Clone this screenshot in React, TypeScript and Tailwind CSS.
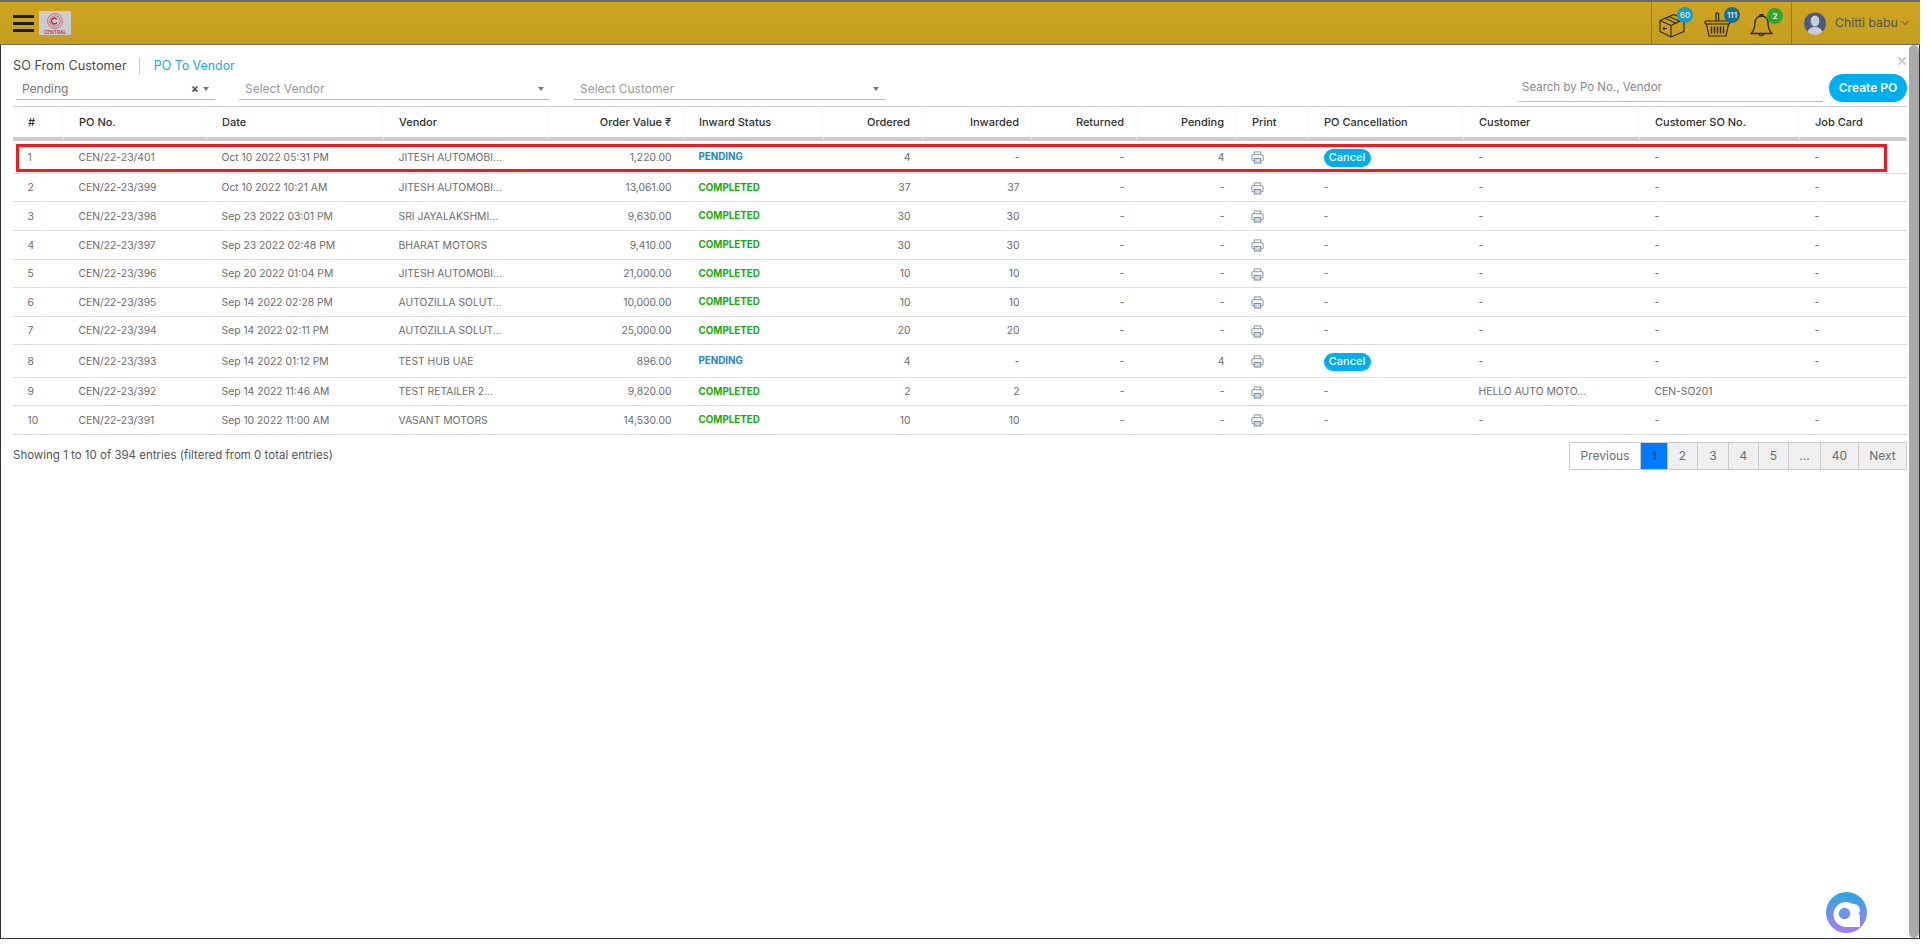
import { ChevronDown, X } from "lucide-react"

type Row = {
  n: number
  po: string
  date: string
  vendor: string
  value: string
  status: "PENDING" | "COMPLETED"
  ordered: string
  inwarded: string
  pending: string
  cancel?: boolean
  customer?: string
  so?: string
  job?: string
  h: string
}

const rows: Row[] = [
  { n: 1, po: "CEN/22-23/401", date: "Oct 10 2022 05:31 PM", vendor: "JITESH AUTOMOBI...", value: "1,220.00", status: "PENDING", ordered: "4", inwarded: "-", pending: "4", cancel: true, h: "h-[33px]" },
  { n: 2, po: "CEN/22-23/399", date: "Oct 10 2022 10:21 AM", vendor: "JITESH AUTOMOBI...", value: "13,061.00", status: "COMPLETED", ordered: "37", inwarded: "37", pending: "-", h: "h-[28px]" },
  { n: 3, po: "CEN/22-23/398", date: "Sep 23 2022 03:01 PM", vendor: "SRI JAYALAKSHMI...", value: "9,630.00", status: "COMPLETED", ordered: "30", inwarded: "30", pending: "-", h: "h-[29px]" },
  { n: 4, po: "CEN/22-23/397", date: "Sep 23 2022 02:48 PM", vendor: "BHARAT MOTORS", value: "9,410.00", status: "COMPLETED", ordered: "30", inwarded: "30", pending: "-", h: "h-[29px]" },
  { n: 5, po: "CEN/22-23/396", date: "Sep 20 2022 01:04 PM", vendor: "JITESH AUTOMOBI...", value: "21,000.00", status: "COMPLETED", ordered: "10", inwarded: "10", pending: "-", h: "h-[28px]" },
  { n: 6, po: "CEN/22-23/395", date: "Sep 14 2022 02:28 PM", vendor: "AUTOZILLA SOLUT...", value: "10,000.00", status: "COMPLETED", ordered: "10", inwarded: "10", pending: "-", h: "h-[29px]" },
  { n: 7, po: "CEN/22-23/394", date: "Sep 14 2022 02:11 PM", vendor: "AUTOZILLA SOLUT...", value: "25,000.00", status: "COMPLETED", ordered: "20", inwarded: "20", pending: "-", h: "h-[28px]" },
  { n: 8, po: "CEN/22-23/393", date: "Sep 14 2022 01:12 PM", vendor: "TEST HUB UAE", value: "896.00", status: "PENDING", ordered: "4", inwarded: "-", pending: "4", cancel: true, h: "h-[33px]" },
  { n: 9, po: "CEN/22-23/392", date: "Sep 14 2022 11:46 AM", vendor: "TEST RETAILER 2...", value: "9,820.00", status: "COMPLETED", ordered: "2", inwarded: "2", pending: "-", customer: "HELLO AUTO MOTO...", so: "CEN-SO201", job: "", h: "h-[28px]" },
  { n: 10, po: "CEN/22-23/391", date: "Sep 10 2022 11:00 AM", vendor: "VASANT MOTORS", value: "14,530.00", status: "COMPLETED", ordered: "10", inwarded: "10", pending: "-", h: "h-[29px]" },
]

const pages = [
  { label: "Previous", cls: "w-[71px] bg-white" },
  { label: "1", cls: "w-[27px] bg-[#007bff] text-[#0a3f80]" },
  { label: "2", cls: "w-[30px] bg-[#efefef]" },
  { label: "3", cls: "w-[31px] bg-[#efefef]" },
  { label: "4", cls: "w-[30px] bg-[#efefef]" },
  { label: "5", cls: "w-[30px] bg-[#efefef]" },
  { label: "...", cls: "w-[32px] bg-[#efefef]" },
  { label: "40", cls: "w-[38px] bg-[#efefef]" },
  { label: "Next", cls: "w-[48px] bg-[#efefef]" },
]

function Caret() {
  return <span className="h-0 w-0 border-x-[3.5px] border-t-[4px] border-x-transparent border-t-[#777]" />
}

function Badge({ text, className }: { text: string; className: string }) {
  return (
    <span className={`absolute flex h-4 w-4 items-center justify-center rounded-full text-[8px] font-semibold text-[#d5e4e8] ${className}`}>
      {text}
    </span>
  )
}

function PrintIcon() {
  return (
    <svg width="13" height="13" viewBox="0 0 14 14" fill="none" stroke="#7d8894" strokeWidth="1">
      <path d="M3.5 4V1h7v3" />
      <rect x="1" y="4" width="12" height="6.5" rx="1.2" />
      <rect x="3.5" y="8" width="7" height="5" fill="#c5dcf0" />
    </svg>
  )
}

function BoxIcon() {
  return (
    <svg width="26" height="26" viewBox="0 0 26 26" fill="none" stroke="#2b2208" strokeWidth="1.1" strokeLinejoin="round">
      <path d="M1 8.5 15 2.5 25 7v12.5L12 25 1 19.5z" />
      <path d="M1 8.5 12 13.5 25 7M12 13.5V25" />
      <path d="M6 6.2 17 11.2v0M10 4.6 20.5 9.2" />
      <path d="M4 16.5h4M4 16.5l1.5-1.2M4 16.5l1.5 1.2" />
    </svg>
  )
}

function BasketIcon() {
  return (
    <svg width="27" height="26" viewBox="0 0 27 26" fill="none" stroke="#2b2208" strokeWidth="1.2" strokeLinejoin="round">
      <path d="M12 9V2.2a1.3 1.3 0 0 1 2.6 0V9" />
      <rect x="1" y="9" width="25" height="3" rx="1.2" />
      <path d="M2.5 12 5 24h17l2.5-12" />
      <path d="M7.5 14.5v7M10.5 14.5v7M13.5 14.5v7M16.5 14.5v7M19.5 14.5v7" strokeWidth="1.4" />
    </svg>
  )
}

function BellIcon() {
  return (
    <svg width="23" height="25" viewBox="0 0 23 25" fill="none" stroke="#2b2208" strokeWidth="1.3" strokeLinejoin="round">
      <path d="M11.5 3a6.5 6.5 0 0 0-6.5 6.5c0 6-1.5 8.5-4 11h21c-2.5-2.5-4-5-4-11A6.5 6.5 0 0 0 11.5 3z" />
      <path d="M10 3V1.6h3V3M8.8 20.5a2.8 2.8 0 0 0 5.4 0" />
    </svg>
  )
}

function Avatar() {
  return (
    <svg width="22" height="23" viewBox="0 0 22 23">
      <circle cx="11" cy="11.5" r="11" fill="#4d5a7c" />
      <ellipse cx="11" cy="9" rx="4.4" ry="5.6" fill="#c9ccd2" />
      <path d="M3.5 20c1.5-4 4.5-5 7.5-5s6 1 7.5 5a11 11 0 0 1-15 0z" fill="#c9ccd2" />
    </svg>
  )
}

function Logo() {
  return (
    <div className="flex h-6 w-8 flex-col items-center bg-[#cccccc] pt-0.5">
      <svg width="18" height="16" viewBox="0 0 18 16" fill="none" stroke="#c8505f">
        <circle cx="9" cy="8" r="7.4" strokeWidth="0.8" />
        <circle cx="9" cy="8" r="5.2" strokeWidth="0.8" />
        <path d="M11 6.3a3 3 0 1 0 0 3.4" strokeWidth="1.3" stroke="#a82a3c" />
      </svg>
      <span className="text-[5px] font-semibold leading-[6px] tracking-tight text-[#c0394c]">CENTRAL</span>
    </div>
  )
}

function ChatBubble() {
  return (
    <svg width="41" height="41" viewBox="0 0 41 41">
      <defs>
        <linearGradient id="bubble" x1="0" y1="0" x2="0" y2="1">
          <stop offset="0" stopColor="#2aa8e0" />
          <stop offset="1" stopColor="#a97bf6" />
        </linearGradient>
      </defs>
      <circle cx="20.5" cy="20.5" r="20.5" fill="url(#bubble)" />
      <circle cx="20" cy="22.5" r="12.5" fill="#fff" />
      <rect x="20" y="22.5" width="14" height="12.5" fill="#fff" />
      <rect x="20" y="12" width="14" height="12" rx="6" fill="#fff" />
      <circle cx="18.5" cy="21.5" r="5.8" fill="#6f93ea" />
    </svg>
  )
}

function Select({ label, width, clear, dim }: { label: string; width: string; clear?: boolean; dim?: boolean }) {
  return (
    <div className={`flex h-[22px] items-center justify-between border-b border-[#bbb] pl-1.5 pr-1.5 text-[12px] ${width} ${dim ? "text-[#999]" : "text-[#777]"}`}>
      <span>{label}</span>
      <span className="flex items-center gap-1">
        {clear && <span className="text-[12px] font-bold leading-none text-[#555]">×</span>}
        <Caret />
      </span>
    </div>
  )
}

const th = "border-r border-[#fafafa] pl-[15px] pr-[12px] font-medium"
const td = "pl-[14.5px] pr-[12.5px] pt-px border-b border-[#ddd]"

export default function App() {
  return (
    <div className="h-[946px] w-[1930px] overflow-hidden bg-white font-['Inter','Liberation_Sans',sans-serif] text-[#6c6c6c]">
      <div className="flex h-[939px] w-[1920px] flex-col border-x border-b border-[#333]">
        <header className="-mx-px flex h-[45px] shrink-0 items-center border-y border-[#6a6a6a] border-t-2 bg-gradient-to-b from-[#cda421] to-[#c59e20]">
          <div className="ml-[13px] flex w-[21px] flex-col gap-1">
            <span className="h-[3px] bg-[#1b1b1b]" />
            <span className="h-[3px] bg-[#1b1b1b]" />
            <span className="h-[3px] bg-[#1b1b1b]" />
          </div>
          <div className="ml-[5px]"><Logo /></div>
          <div className="ml-auto flex h-full items-center">
            <div className="flex h-full w-[141px] items-center gap-[19px] border-x border-[#9c7c1a] pl-[7px]">
              <div className="relative pt-1"><BoxIcon /><Badge text="60" className="-right-[8px] -top-[1px] bg-[#1b9ac4]" /></div>
              <div className="relative pt-1"><BasketIcon /><Badge text="111" className="-right-[9px] -top-[1px] bg-[#17708e]" /></div>
              <div className="relative pt-1"><BellIcon /><Badge text="2" className="-right-[10px] -top-[1px] bg-[#2fa52f] text-white" /></div>
            </div>
            <div className="flex h-full w-[128px] items-center pl-3">
              <Avatar />
              <span className="ml-[9px] text-[12.3px] text-[#555]">Chitti babu</span>
              <ChevronDown className="ml-[1px] h-3 w-3 text-[#555]" />
            </div>
          </div>
        </header>

        <div className="flex min-h-0 flex-1">
          <main className="relative min-w-0 flex-1 pl-3 pr-[2px]">
            <div className="flex h-[57px] items-start justify-between pt-3">
              <div>
                <div className="flex h-[18px] items-center">
                  <span className="text-[12.7px] text-[#4a4a4a]">SO From Customer</span>
                  <span className="ml-[12px] mr-[14px] h-[17px] w-px bg-[#ccc]" />
                  <span className="text-[12.4px] font-normal text-[#1ea7e0]">PO To Vendor</span>
                </div>
                <div className="ml-[3px] mt-[3px] flex gap-6">
                  <Select label="Pending" width="w-[199px]" clear />
                  <Select label="Select Vendor" width="w-[311px]" dim />
                  <Select label="Select Customer" width="w-[311px]" dim />
                </div>
              </div>
              <div className="flex items-end gap-1.5 pt-[17px]">
                <div className="flex h-[27px] w-[304px] items-center border-b border-[#bbb] pl-[3px] text-[11.5px] text-[#888]">Search by Po No., Vendor</div>
                <button type="button" className="h-[28px] w-[78px] rounded-full bg-[#00aeef] text-[12px] font-semibold text-white shadow-sm">Create PO</button>
              </div>
            </div>

            <X className="absolute right-[1px] top-[10px] h-3 w-3 text-[#cccccc]" strokeWidth={4.5} />

            <div className="relative mt-[4px]">
              <table className="w-[1894px] table-fixed border-separate border-spacing-0 text-[10.35px]">
                <colgroup>
                  <col className="w-[51px]" />
                  <col className="w-[143px]" />
                  <col className="w-[177px]" />
                  <col className="w-[164px]" />
                  <col className="w-[136px]" />
                  <col className="w-[140px]" />
                  <col className="w-[99px]" />
                  <col className="w-[109px]" />
                  <col className="w-[105px]" />
                  <col className="w-[100px]" />
                  <col className="w-[72px]" />
                  <col className="w-[155px]" />
                  <col className="w-[176px]" />
                  <col className="w-[160px]" />
                  <col className="w-[107px]" />
                </colgroup>
                <thead>
                  <tr className="h-[35px] text-[11px] text-[#2f2f2f] [&>th]:border-t [&>th]:border-t-[#ccc] [&>th]:border-b-4 [&>th]:border-b-[#cccccc]">
                    <th className={`${th} text-left`}>#</th>
                    <th className={`${th} text-left`}>PO No.</th>
                    <th className={`${th} text-left`}>Date</th>
                    <th className={`${th} text-left`}>Vendor</th>
                    <th className={`${th} text-right`}>Order Value ₹</th>
                    <th className={`${th} text-left`}>Inward Status</th>
                    <th className={`${th} text-right`}>Ordered</th>
                    <th className={`${th} text-right`}>Inwarded</th>
                    <th className={`${th} text-right`}>Returned</th>
                    <th className={`${th} text-right`}>Pending</th>
                    <th className={`${th} text-left`}>Print</th>
                    <th className={`${th} text-left`}>PO Cancellation</th>
                    <th className={`${th} text-left`}>Customer</th>
                    <th className={`${th} text-left`}>Customer SO No.</th>
                    <th className={`${th} text-left`}>Job Card</th>
                  </tr>
                </thead>
                <tbody>
                  {rows.map((r) => (
                    <tr key={r.n} className={r.h}>
                      <td className={td}>{r.n}</td>
                      <td className={td}>{r.po}</td>
                      <td className={td}>{r.date}</td>
                      <td className={td}>{r.vendor}</td>
                      <td className={`${td} text-right`}>{r.value}</td>
                      <td className={`${td} text-[9.8px] font-bold ${r.status === "PENDING" ? "text-[#1f87c9]" : "text-[#22a80c]"}`}>{r.status}</td>
                      <td className={`${td} text-right`}>{r.ordered}</td>
                      <td className={`${td} text-right`}>{r.inwarded}</td>
                      <td className={`${td} text-right`}>-</td>
                      <td className={`${td} text-right`}>{r.pending}</td>
                      <td className={td}><div className="-ml-px"><PrintIcon /></div></td>
                      <td className={td}>
                        {r.cancel ? (
                          <span className="inline-flex h-[18px] w-[47px] items-center justify-center rounded-full bg-[#00aeef] text-[11px] font-medium text-white">Cancel</span>
                        ) : "-"}
                      </td>
                      <td className={td}>{r.customer ?? "-"}</td>
                      <td className={td}>{r.so ?? "-"}</td>
                      <td className={td}>{r.job ?? "-"}</td>
                    </tr>
                  ))}
                </tbody>
              </table>
              <div className="pointer-events-none absolute left-[3px] top-[38px] h-[28px] w-[1871px] border-[3px] border-[#ed1c24]" />
            </div>

            <div className="mt-[7px] flex items-center justify-between">
              <span className="text-[11.5px] text-[#555]">Showing 1 to 10 of 394 entries (filtered from 0 total entries)</span>
              <div className="flex h-[28px] border-l border-[#ccc]">
                {pages.map((p) => (
                  <span key={p.label} className={`flex items-center justify-center border-y border-r border-[#ccc] text-[12px] ${p.cls}`}>{p.label}</span>
                ))}
              </div>
            </div>

            <div className="absolute left-[1825px] top-[847px]"><ChatBubble /></div>
          </main>
          <div className="w-[10px] shrink-0 rounded-full bg-[#aaaaaa]" />
        </div>
      </div>
    </div>
  )
}
